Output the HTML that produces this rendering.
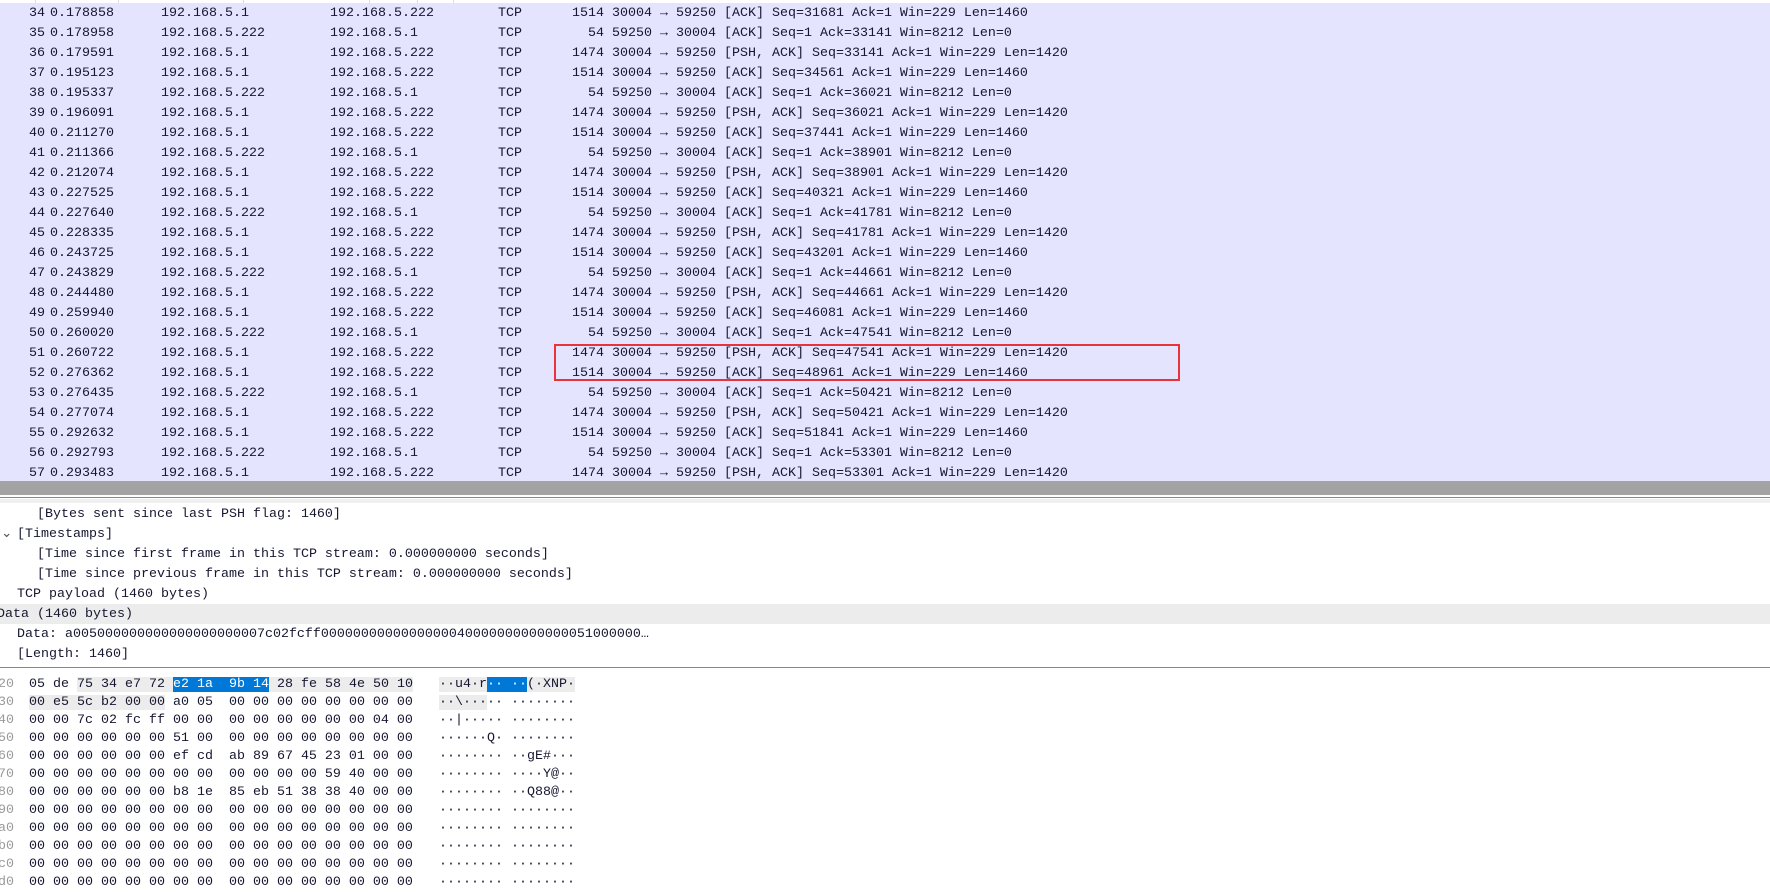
<!DOCTYPE html>
<html><head><meta charset="utf-8"><style>
body{margin:0;width:1770px;height:889px;overflow:hidden;background:#fff;font-family:"Liberation Mono",monospace;font-size:13.33px;color:#161630;position:relative}
.r{position:absolute;left:0;width:1770px;height:20px;line-height:20px;white-space:pre}
.c{position:absolute;top:0}
.rt{text-align:right}
#list{position:absolute;left:0;top:3px;width:1770px;height:478px;background:#e4e4fe}
.sep{position:absolute;top:0;width:1px;height:3px;background:#ddd}
.h{position:absolute;left:0;height:18px;line-height:18px;white-space:pre}
.g{background:#ececec}.b{background:#0078d7;color:#fff}
</style></head><body>
<div class="sep" style="left:35px"></div><div class="sep" style="left:118px"></div><div class="sep" style="left:243px"></div><div class="sep" style="left:369px"></div><div class="sep" style="left:417px"></div><div class="sep" style="left:453px"></div>
<div id="list"></div>
<div id="rows"></div>
<div style="position:absolute;left:554px;top:344px;width:626px;height:37px;border:2px solid #e8333a;box-sizing:border-box"></div>
<div style="position:absolute;left:0;top:481px;width:1770px;height:14px;background:#a3a3a3"></div>
<div style="position:absolute;left:0;top:497px;width:1770px;height:1px;background:#888"></div>
<div style="position:absolute;left:0;top:499px;width:1770px;height:4px;background:#f0f0f0"></div>
<div style="position:absolute;left:0;top:604px;width:1770px;height:20px;background:#ececec"></div>
<div class="r" style="top:505px"><span class="c" style="left:37px">[Bytes sent since last PSH flag: 1460]</span></div>
<div class="r" style="top:525px"><span class="c" style="left:1px;color:#555">⌄</span><span class="c" style="left:17px">[Timestamps]</span></div>
<div class="r" style="top:545px"><span class="c" style="left:37px">[Time since first frame in this TCP stream: 0.000000000 seconds]</span></div>
<div class="r" style="top:565px"><span class="c" style="left:37px">[Time since previous frame in this TCP stream: 0.000000000 seconds]</span></div>
<div class="r" style="top:585px"><span class="c" style="left:17px">TCP payload (1460 bytes)</span></div>
<div class="r" style="top:605px"><span class="c" style="left:-3px">Data (1460 bytes)</span></div>
<div class="r" style="top:625px"><span class="c" style="left:17px">Data: a005000000000000000000007c02fcff0000000000000000040000000000000051000000…</span></div>
<div class="r" style="top:645px"><span class="c" style="left:17px">[Length: 1460]</span></div>
<div style="position:absolute;left:0;top:667px;width:1770px;height:1px;background:#888"></div>
<div id="hex"></div>
<script>
var d=[["34","0.178858","192.168.5.1","192.168.5.222","1514","30004 → 59250 [ACK] Seq=31681 Ack=1 Win=229 Len=1460"],
["35","0.178958","192.168.5.222","192.168.5.1","54","59250 → 30004 [ACK] Seq=1 Ack=33141 Win=8212 Len=0"],
["36","0.179591","192.168.5.1","192.168.5.222","1474","30004 → 59250 [PSH, ACK] Seq=33141 Ack=1 Win=229 Len=1420"],
["37","0.195123","192.168.5.1","192.168.5.222","1514","30004 → 59250 [ACK] Seq=34561 Ack=1 Win=229 Len=1460"],
["38","0.195337","192.168.5.222","192.168.5.1","54","59250 → 30004 [ACK] Seq=1 Ack=36021 Win=8212 Len=0"],
["39","0.196091","192.168.5.1","192.168.5.222","1474","30004 → 59250 [PSH, ACK] Seq=36021 Ack=1 Win=229 Len=1420"],
["40","0.211270","192.168.5.1","192.168.5.222","1514","30004 → 59250 [ACK] Seq=37441 Ack=1 Win=229 Len=1460"],
["41","0.211366","192.168.5.222","192.168.5.1","54","59250 → 30004 [ACK] Seq=1 Ack=38901 Win=8212 Len=0"],
["42","0.212074","192.168.5.1","192.168.5.222","1474","30004 → 59250 [PSH, ACK] Seq=38901 Ack=1 Win=229 Len=1420"],
["43","0.227525","192.168.5.1","192.168.5.222","1514","30004 → 59250 [ACK] Seq=40321 Ack=1 Win=229 Len=1460"],
["44","0.227640","192.168.5.222","192.168.5.1","54","59250 → 30004 [ACK] Seq=1 Ack=41781 Win=8212 Len=0"],
["45","0.228335","192.168.5.1","192.168.5.222","1474","30004 → 59250 [PSH, ACK] Seq=41781 Ack=1 Win=229 Len=1420"],
["46","0.243725","192.168.5.1","192.168.5.222","1514","30004 → 59250 [ACK] Seq=43201 Ack=1 Win=229 Len=1460"],
["47","0.243829","192.168.5.222","192.168.5.1","54","59250 → 30004 [ACK] Seq=1 Ack=44661 Win=8212 Len=0"],
["48","0.244480","192.168.5.1","192.168.5.222","1474","30004 → 59250 [PSH, ACK] Seq=44661 Ack=1 Win=229 Len=1420"],
["49","0.259940","192.168.5.1","192.168.5.222","1514","30004 → 59250 [ACK] Seq=46081 Ack=1 Win=229 Len=1460"],
["50","0.260020","192.168.5.222","192.168.5.1","54","59250 → 30004 [ACK] Seq=1 Ack=47541 Win=8212 Len=0"],
["51","0.260722","192.168.5.1","192.168.5.222","1474","30004 → 59250 [PSH, ACK] Seq=47541 Ack=1 Win=229 Len=1420"],
["52","0.276362","192.168.5.1","192.168.5.222","1514","30004 → 59250 [ACK] Seq=48961 Ack=1 Win=229 Len=1460"],
["53","0.276435","192.168.5.222","192.168.5.1","54","59250 → 30004 [ACK] Seq=1 Ack=50421 Win=8212 Len=0"],
["54","0.277074","192.168.5.1","192.168.5.222","1474","30004 → 59250 [PSH, ACK] Seq=50421 Ack=1 Win=229 Len=1420"],
["55","0.292632","192.168.5.1","192.168.5.222","1514","30004 → 59250 [ACK] Seq=51841 Ack=1 Win=229 Len=1460"],
["56","0.292793","192.168.5.222","192.168.5.1","54","59250 → 30004 [ACK] Seq=1 Ack=53301 Win=8212 Len=0"],
["57","0.293483","192.168.5.1","192.168.5.222","1474","30004 → 59250 [PSH, ACK] Seq=53301 Ack=1 Win=229 Len=1420"]];
var h="";d.forEach(function(r,i){h+='<div class="r" style="top:'+(4+20*i)+'px"><span class="c rt" style="left:0;width:45px">'+r[0]+'</span><span class="c" style="left:50px">'+r[1]+'</span><span class="c" style="left:161px">'+r[2]+'</span><span class="c" style="left:330px">'+r[3]+'</span><span class="c" style="left:498px">TCP</span><span class="c rt" style="left:520px;width:84px">'+r[4]+'</span><span class="c" style="left:612px">'+r[5]+'</span></div>';});
document.getElementById("rows").innerHTML=h;
var hx=[
['20','<span>05 de </span><span class="g">75 34 e7 72 </span><span class="b">e2 1a  9b 14</span><span class="g"> 28 fe 58 4e 50 10</span>','<span class="g">··u4·r</span><span class="b">·· ··</span><span class="g">(·XNP·</span>'],
['30','<span class="g">00 e5 5c b2 00 00</span> a0 05  00 00 00 00 00 00 00 00','<span class="g">··\\···</span>·· ········'],
['40','00 00 7c 02 fc ff 00 00  00 00 00 00 00 00 04 00','··|····· ········'],
['50','00 00 00 00 00 00 51 00  00 00 00 00 00 00 00 00','······Q· ········'],
['60','00 00 00 00 00 00 ef cd  ab 89 67 45 23 01 00 00','········ ··gE#···'],
['70','00 00 00 00 00 00 00 00  00 00 00 00 59 40 00 00','········ ····Y@··'],
['80','00 00 00 00 00 00 b8 1e  85 eb 51 38 38 40 00 00','········ ··Q88@··'],
['90','00 00 00 00 00 00 00 00  00 00 00 00 00 00 00 00','········ ········'],
['a0','00 00 00 00 00 00 00 00  00 00 00 00 00 00 00 00','········ ········'],
['b0','00 00 00 00 00 00 00 00  00 00 00 00 00 00 00 00','········ ········'],
['c0','00 00 00 00 00 00 00 00  00 00 00 00 00 00 00 00','········ ········'],
['d0','00 00 00 00 00 00 00 00  00 00 00 00 00 00 00 00','········ ········']];
h="";hx.forEach(function(r,i){var t=676+18*i;h+='<div class="h" style="top:'+t+'px;left:-2px;color:#999">'+r[0]+'</div><div class="h" style="top:'+t+'px;left:29px">'+r[1]+'</div><div class="h" style="top:'+t+'px;left:439px">'+r[2]+'</div>';});
document.getElementById("hex").innerHTML=h;
</script>
</body></html>
